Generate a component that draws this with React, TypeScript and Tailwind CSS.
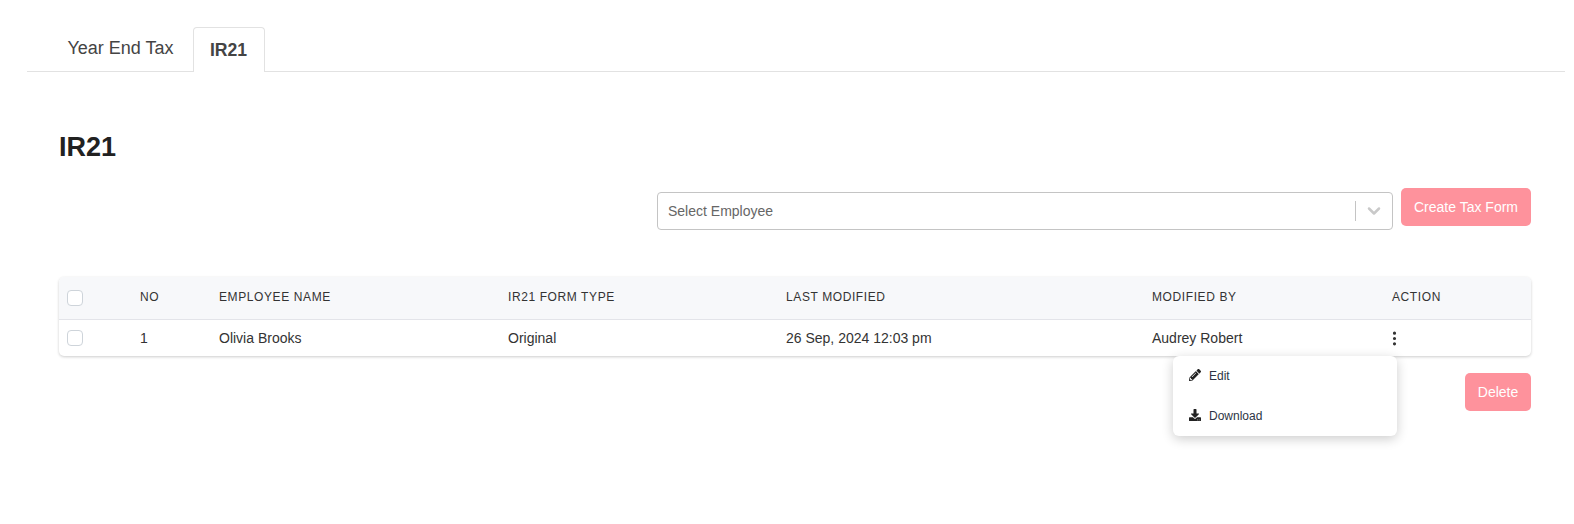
import { ChevronDown } from "lucide-react";
import { BsThreeDotsVertical } from "react-icons/bs";
import { FaDownload, FaPencilAlt } from "react-icons/fa";

const columns = "grid grid-cols-[81px_79px_289px_278px_366px_240px_1fr] items-center";

const Checkbox = () => (
  <span className="ml-2 block h-4 w-4 rounded-[4px] border border-[#ced4da] bg-white" />
);

const App = () => {
  return (
    <div className="h-[524px] bg-white font-['Liberation_Sans',Arial,sans-serif] text-[#212529]">
      <div className="ml-[27px] mr-[9px] flex h-[72px] items-end border-b border-[#e2e2e2] pl-[1px]">
        <div className="flex h-[45px] w-[165px] items-center justify-center pl-[20px] text-[18px] text-[#444]">
          Year End Tax
        </div>
        <div className="-mb-px flex h-[45px] w-[72px] items-center justify-center rounded-t-[4px] border border-b-0 border-[#e2e2e2] bg-white pr-[1px] text-[17.6px] font-bold text-[#444]">
          IR21
        </div>
      </div>

      <div className="relative mx-[43px] pl-[16px]">
        <h1 className="mt-[57px] text-[27px] font-bold leading-[36px] text-[#212121]">IR21</h1>

        <div className="mt-[23px] flex justify-end gap-[8px]">
          <div className="mt-[4px] flex h-[38px] w-[736px] items-center rounded-[4px] border border-[#c4c4c4] bg-white pl-[10px] pr-[8px] text-[14px] text-[#666]">
            <span className="flex-1">Select Employee</span>
            <span className="h-5 w-px bg-[#c4c4c4]" />
            <ChevronDown className="ml-[8px] h-5 w-5 text-[#c9c9c9]" strokeWidth={3} />
          </div>
          <button
            type="button"
            className="h-[38px] w-[130px] rounded-[5px] bg-[#fe929c] text-[14px] text-white"
          >
            Create Tax Form
          </button>
        </div>

        <div className="mt-[47px] rounded-[5px] bg-white shadow-[0_1px_3px_rgba(0,0,0,0.2)]">
          <div className={`${columns} h-[43px] rounded-t-[5px] border-b border-[#e3e4e9] bg-[#f7f8fa] text-[12px] tracking-[0.6px] text-[#333]`}>
            <Checkbox />
            <span className="pb-[2px]">NO</span>
            <span className="pb-[2px]">EMPLOYEE NAME</span>
            <span className="pb-[2px]">IR21 FORM TYPE</span>
            <span className="pb-[2px]">LAST MODIFIED</span>
            <span className="pb-[2px]">MODIFIED BY</span>
            <span className="pb-[2px]">ACTION</span>
          </div>
          <div className={`${columns} h-[36px] text-[14px] text-[#333]`}>
            <Checkbox />
            <span>1</span>
            <span>Olivia Brooks</span>
            <span>Original</span>
            <span>26 Sep, 2024 12:03 pm</span>
            <span>Audrey Robert</span>
            <BsThreeDotsVertical className="-ml-[6px] h-[17px] w-[17px] text-[#333]" />
          </div>
        </div>

        <div className="mt-[17px] flex justify-end">
          <button
            type="button"
            className="h-[38px] w-[66px] rounded-[5px] bg-[#fe929c] text-[14px] text-white"
          >
            Delete
          </button>
        </div>

        {/* row action menu */}
        <div className="absolute left-[1130px] top-[227px] flex h-[80px] w-[224px] flex-col rounded-[6px] bg-white pl-[16px] text-[12px] text-[#2d3445] shadow-[0_3px_12px_rgba(0,0,0,0.2)]">
          <div className="flex h-[40px] items-center gap-[8px]">
            <FaPencilAlt className="mb-[3px] h-3 w-3 text-[#222]" />
            <span>Edit</span>
          </div>
          <div className="flex h-[40px] items-center gap-[8px]">
            <FaDownload className="mb-[3px] h-3 w-3 text-[#222]" />
            <span>Download</span>
          </div>
        </div>
      </div>
    </div>
  );
};

export default App;
